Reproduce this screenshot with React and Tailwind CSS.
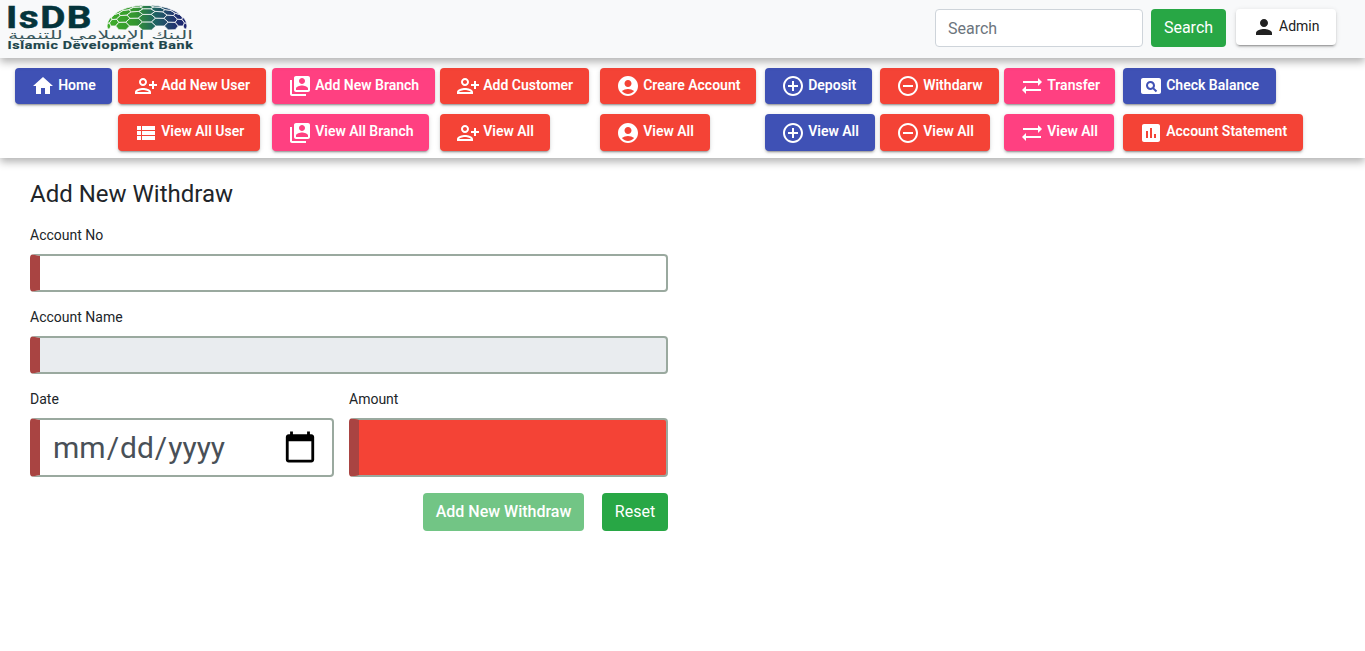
import {
  MdHome, MdOutlinePersonAddAlt1, MdViewList, MdSwitchAccount, MdAccountCircle,
  MdAddCircleOutline, MdRemoveCircleOutline, MdSyncAlt, MdPageview, MdAssessment, MdPerson,
} from "react-icons/md";

const tones = {
  blue: "bg-[#3f51b5]",
  red: "bg-[#f44336]",
  pink: "bg-[#ff4081]",
};

const columns = [
  [{ label: "Home", Icon: MdHome, tone: "blue", width: "w-[97px]" }],
  [
    { label: "Add New User", Icon: MdOutlinePersonAddAlt1, tone: "red", width: "w-[148px]" },
    { label: "View All User", Icon: MdViewList, tone: "red", width: "w-[142px]" },
  ],
  [
    { label: "Add New Branch", Icon: MdSwitchAccount, tone: "pink", width: "w-[163px]" },
    { label: "View All Branch", Icon: MdSwitchAccount, tone: "pink", width: "w-[157px]" },
  ],
  [
    { label: "Add Customer", Icon: MdOutlinePersonAddAlt1, tone: "red", width: "w-[149px]" },
    { label: "View All", Icon: MdOutlinePersonAddAlt1, tone: "red", width: "w-[110px]" },
  ],
  [
    { label: "Creare Account", Icon: MdAccountCircle, tone: "red", width: "w-[156px]" },
    { label: "View All", Icon: MdAccountCircle, tone: "red", width: "w-[110px]" },
  ],
  [
    { label: "Deposit", Icon: MdAddCircleOutline, tone: "blue", width: "w-[107px]" },
    { label: "View All", Icon: MdAddCircleOutline, tone: "blue", width: "w-[110px]" },
  ],
  [
    { label: "Withdarw", Icon: MdRemoveCircleOutline, tone: "red", width: "w-[119px]" },
    { label: "View All", Icon: MdRemoveCircleOutline, tone: "red", width: "w-[110px]" },
  ],
  [
    { label: "Transfer", Icon: MdSyncAlt, tone: "pink", width: "w-[111px]" },
    { label: "View All", Icon: MdSyncAlt, tone: "pink", width: "w-[110px]" },
  ],
  [
    { label: "Check Balance", Icon: MdPageview, tone: "blue", width: "w-[153px]" },
    { label: "Account Statement", Icon: MdAssessment, tone: "red", width: "w-[180px]" },
  ],
];

const raised =
  "shadow-[0_3px_1px_-2px_rgba(0,0,0,0.2),0_2px_2px_0_rgba(0,0,0,0.14),0_1px_5px_0_rgba(0,0,0,0.12)]";

function NavButton({ label, Icon, tone, width, second }) {
  return (
    <button
      className={`flex items-start rounded pl-[15.5px] text-sm font-semibold whitespace-nowrap text-white ${raised} ${tones[tone]} ${width} ${second ? "h-[37px]" : "h-9"}`}
    >
      <Icon className={`size-6 shrink-0 ${second ? "mt-[7px]" : "mt-1.5"}`} />
      <span className="ml-[3.7px] leading-[35px]">{label}</span>
    </button>
  );
}

// Hexagonal lattice wrapped over a half sphere.
function domeCells() {
  const size = 0.225;
  const cells = [];
  const project = (u, v) => {
    const r = Math.hypot(u, v) || 0.0001;
    const k = Math.sin(Math.min(r, 1.57)) / r;
    return `${(147 + 40 * k * u).toFixed(1)},${(26 - 21 * k * v).toFixed(1)}`;
  };
  for (let i = -5; i <= 5; i++) {
    for (let j = -1; j <= 5; j++) {
      const u = i * size * 1.5;
      const v = (j + (i % 2 ? 0.5 : 0)) * size * 1.732;
      if (v < -0.01 || Math.hypot(u, v) > 1.52) continue;
      const points = [0, 1, 2, 3, 4, 5].map((n) => {
        const a = (n * Math.PI) / 3;
        return project(u + size * Math.cos(a), v + size * Math.sin(a));
      });
      cells.push(points.join(" "));
    }
  }
  return cells;
}

const cells = domeCells();

function Logo() {
  return (
    <svg width="200" height="58" viewBox="0 0 200 58" role="img" fontFamily="Roboto, sans-serif">
      <defs>
        <linearGradient id="dome" x1="108" x2="186" y1="0" y2="0" gradientUnits="userSpaceOnUse">
          <stop offset="0" stopColor="#3fae2a" />
          <stop offset="0.35" stopColor="#34962f" />
          <stop offset="0.6" stopColor="#1f6462" />
          <stop offset="0.85" stopColor="#223570" />
          <stop offset="1" stopColor="#1d2470" />
        </linearGradient>
      </defs>
      <text x="6" y="28" fontSize="31" fontWeight="700" letterSpacing="1.2" fill="#04343b" stroke="#04343b" strokeWidth="0.5" textLength="87" lengthAdjust="spacingAndGlyphs">IsDB</text>
      <g fill="url(#dome)" stroke="#f8f9fa" strokeWidth="0.8">
        {cells.map((points) => (
          <polygon key={points} points={points} />
        ))}
      </g>
      <text x="193" y="39" direction="rtl" fontSize="11.5" fontFamily="'DejaVu Sans', sans-serif" fill="#39585d" textLength="185" lengthAdjust="spacingAndGlyphs">البنك الإسلامي للتنمية</text>
      <text x="7.5" y="49.3" fontSize="10.8" fontWeight="700" letterSpacing="0.5" fill="#1d454b" stroke="#1d454b" strokeWidth="0.2" textLength="186" lengthAdjust="spacingAndGlyphs">Islamic Development Bank</text>
    </svg>
  );
}

const field =
  "block w-full rounded border-2 border-l-[10px] border-[#9aa99f] border-l-[#a94442] outline-none";

export default function App() {
  return (
    <div className="h-[651px] w-full overflow-hidden bg-white font-[Roboto,sans-serif] text-[#212529]">
      <header className="relative z-20 flex h-[58px] items-start bg-[#f8f9fa] shadow-[0_4px_8px_rgba(0,0,0,0.3)]">
        <Logo />
        <div className="mt-[9px] mr-[29px] ml-auto flex items-start">
          <input
            placeholder="Search"
            className="h-[38px] w-52 rounded border border-[#ced4da] bg-white px-3 text-base outline-none placeholder:text-[#6c757d]"
          />
          <button className="ml-2 h-[38px] w-[75px] rounded bg-[#28a745] text-base text-white">Search</button>
          <button className={`ml-2.5 flex h-9 w-[100px] items-start rounded bg-white pl-4 text-sm text-[#212121] ${raised}`}>
            <MdPerson className="mt-1.5 size-6" />
            <span className="ml-[3px] leading-[35px]">Admin</span>
          </button>
        </div>
      </header>

      <nav className="relative z-10 grid h-[100px] grid-cols-[103px_154px_168px_160px_165px_115px_124px_119px_1fr] bg-white pt-2.5 pl-[15px] shadow-[0_4px_8px_rgba(0,0,0,0.3)]">
        {columns.map((items, i) => (
          <div key={i} className="flex flex-col gap-2.5">
            {items.map((item, row) => (
              <NavButton key={row} {...item} second={row === 1} />
            ))}
          </div>
        ))}
      </nav>

      <main className="w-[668px] pt-[22px] pl-[30px]">
        <h1 className="text-2xl leading-[29px]">Add New Withdraw</h1>
        <form>
          <label className="mt-4 block text-sm leading-5">Account No</label>
          <input className={`mt-[9px] h-[38px] bg-white ${field}`} />
          <label className="mt-[15px] block text-sm leading-5">Account Name</label>
          <input disabled className={`mt-[9px] h-[38px] bg-[#e9ecef] ${field}`} />
          <div className="mt-[15px] grid grid-cols-[304px_319px] gap-[15px]">
            <div>
              <label className="block text-sm leading-5">Date</label>
              <input
                type="date"
                className={`mt-[9px] h-[59px] bg-white px-3 text-[30px] text-[#495057] [&::-webkit-calendar-picker-indicator]:size-9 ${field}`}
              />
            </div>
            <div>
              <label className="block text-sm leading-5">Amount</label>
              <input className={`mt-[9px] h-[59px] bg-[#f44336] ${field}`} />
            </div>
          </div>
          <div className="mt-4 flex justify-end gap-[18px]">
            <button type="button" disabled className="h-[38px] w-[161px] rounded bg-[#28a745] text-base font-medium text-white opacity-65">Add New Withdraw</button>
            <button type="button" className="h-[38px] w-[66px] rounded bg-[#28a745] text-base text-white">Reset</button>
          </div>
        </form>
      </main>
    </div>
  );
}
